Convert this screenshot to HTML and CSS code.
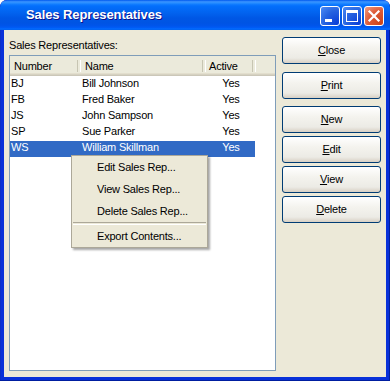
FILE: index.html
```html
<!DOCTYPE html>
<html>
<head>
<meta charset="utf-8">
<link rel="stylesheet" href="styles.css">
</head>
<body>
<div class="window">
  <div class="titlebar">
    <span class="title">Sales Representatives</span>
    <div class="ctrls">
      <span class="tb tb-min"><span class="min-glyph"></span></span>
      <span class="tb tb-max"><span class="max-glyph"></span></span>
      <span class="tb tb-close">
        <svg width="18" height="18" viewBox="0 0 18 18"><path d="M4.5 4.5 L13.5 13.5 M13.5 4.5 L4.5 13.5" stroke="#fff" stroke-width="2.2" stroke-linecap="square"/></svg>
      </span>
    </div>
  </div>
  <div class="client">
    <div class="main">
      <div class="label">Sales Representatives:</div>
      <div class="list">
        <div class="hdr">
          <div class="hc c1">Number</div>
          <div class="hc c2">Name</div>
          <div class="hc c3">Active</div>
        </div>
        <div class="rows">
          <div class="row"><span class="c1">BJ</span><span class="c2">Bill Johnson</span><span class="c3">Yes</span></div>
          <div class="row"><span class="c1">FB</span><span class="c2">Fred Baker</span><span class="c3">Yes</span></div>
          <div class="row"><span class="c1">JS</span><span class="c2">John Sampson</span><span class="c3">Yes</span></div>
          <div class="row"><span class="c1">SP</span><span class="c2">Sue Parker</span><span class="c3">Yes</span></div>
          <div class="row sel"><span class="c1">WS</span><span class="c2">William Skillman</span><span class="c3">Yes</span></div>
        </div>
        <div class="menu">
          <div class="mi">Edit Sales Rep...</div>
          <div class="mi">View Sales Rep...</div>
          <div class="mi">Delete Sales Rep...</div>
          <div class="msep"></div>
          <div class="mi">Export Contents...</div>
        </div>
      </div>
    </div>
    <div class="btns">
      <div class="btn b-close"><u>C</u>lose</div>
      <div class="btn b-print"><u>P</u>rint</div>
      <div class="btn b-new"><u>N</u>ew</div>
      <div class="btn b-std"><u>E</u>dit</div>
      <div class="btn b-std"><u>V</u>iew</div>
      <div class="btn b-std"><u>D</u>elete</div>
    </div>
  </div>
</div>
</body>
</html>
```
FILE: styles.css
```css
* { box-sizing: border-box; }
html, body { margin: 0; padding: 0; }
body {
  width: 390px;
  height: 381px;
  background: #ffffff;
  font-family: "Liberation Sans", Arial, sans-serif;
  font-size: 11px;
  letter-spacing: -0.2px;
  color: #000;
}
.window {
  width: 390px;
  height: 381px;
  display: flex;
  flex-direction: column;
  background: #0831D9;
  border-radius: 7px 7px 0 0;
  overflow: hidden;
  box-shadow: inset -1px -1px #001EA0, inset 1px 0 #0A2FC8;
}
.titlebar {
  height: 30px;
  flex: none;
  display: flex;
  align-items: center;
  padding: 0 6px 0 26px;
  background: linear-gradient(180deg, #0058EE 0%, #3A93FF 6%, #288EFF 10%, #127DFF 14%, #036FFC 20%, #0262EE 44%, #0057E5 60%, #0054E3 76%, #0055EB 86%, #005BF5 92%, #026AFE 96%, #0062EF 100%);
  border-radius: 7px 7px 0 0;
}
.title {
  flex: 1;
  color: #fff;
  font-weight: bold;
  font-size: 13px;
  letter-spacing: -0.1px;
  text-shadow: 1px 1px #0F1089;
  padding-bottom: 1px;
}
.ctrls {
  display: flex;
  gap: 2px;
  padding-top: 1px;
}
.tb {
  position: relative;
  width: 20px;
  height: 20px;
  border: 1px solid #fff;
  border-radius: 3px;
  background: radial-gradient(circle at 90% 90%, #0A3FD8 0%, #2663E0 55%, #4D8CF5 100%);
  display: flex;
  align-items: center;
  justify-content: center;
}
.tb-close {
  background: radial-gradient(circle at 90% 90%, #CC4418 0%, #DD5A36 55%, #F09E84 100%);
}
.min-glyph {
  position: absolute;
  left: 4px;
  bottom: 3px;
  width: 7px;
  height: 3px;
  background: #fff;
}
.max-glyph {
  position: absolute;
  left: 3px;
  top: 3px;
  width: 12px;
  height: 12px;
  border: 1px solid #fff;
  border-top-width: 3px;
}
.client {
  flex: 1;
  margin: 0 4px 4px 4px;
  background: #ECE9D8;
  display: flex;
  padding: 0 5px;
}
.main {
  width: 267px;
  padding-top: 9px;
  display: flex;
  flex-direction: column;
}
.label {
  line-height: 13px;
  height: 13px;
  margin-bottom: 3px;
}
.list {
  position: relative;
  height: 316px;
  border: 1px solid #7F9DB9;
  background: #fff;
}
.hdr {
  height: 20px;
  display: flex;
  background: #EBEADB;
  box-shadow: inset 0 -1px #CBC7B8, inset 0 -2px #D6D2C2, inset 0 -3px #E2DECD;
}
.hc {
  position: relative;
  padding: 4px 0 0 4px;
  line-height: 13px;
}
.hc::after {
  content: "";
  position: absolute;
  right: 0;
  top: 4px;
  bottom: 4px;
  width: 2px;
  border-left: 1px solid #C7C5B2;
  border-right: 1px solid #FFFFFF;
}
.hc.c1 { width: 71px; }
.hc.c2 { width: 125px; }
.hc.c3 { width: 50px; padding-left: 3px; }
.rows {
  padding-top: 1px;
}
.row {
  display: flex;
  width: 245px;
  height: 16px;
  line-height: 13px;
}
.row .c1 { width: 70px; padding-left: 1px; }
.row .c2 { width: 125px; padding-left: 2px; }
.row .c3 { width: 50px; text-align: center; padding-left: 2px; }
.row.sel {
  background: #316AC5;
  color: #fff;
}
.menu {
  position: absolute;
  left: 61px;
  top: 99px;
  width: 137px;
  border: 1px solid #ACA899;
  background: #ECE9D8;
  box-shadow: 2px 2px 2px rgba(0, 0, 0, 0.35);
}
.mi {
  height: 22px;
  line-height: 22px;
  padding-left: 25px;
}
.msep {
  margin: 0 1px;
  height: 3px;
  border-top: 1px solid #ACA899;
  border-bottom: 1px solid #FFFFFF;
}
.btns {
  width: 99px;
  margin-left: 6px;
  padding-top: 7px;
  display: flex;
  flex-direction: column;
}
.btn {
  height: 27px;
  border: 1px solid #003C74;
  border-radius: 3px;
  background: linear-gradient(180deg, #FFFFFF 0%, #F4F3EE 40%, #ECEBE5 80%, #D8D0C4 100%);
  display: flex;
  align-items: center;
  justify-content: center;
  padding-bottom: 1px;
}
.btn u { text-decoration: underline; text-underline-offset: 1px; }
.b-print { margin-top: 8px; }
.b-new { margin-top: 7px; }
.b-std { margin-top: 3px; }
```
